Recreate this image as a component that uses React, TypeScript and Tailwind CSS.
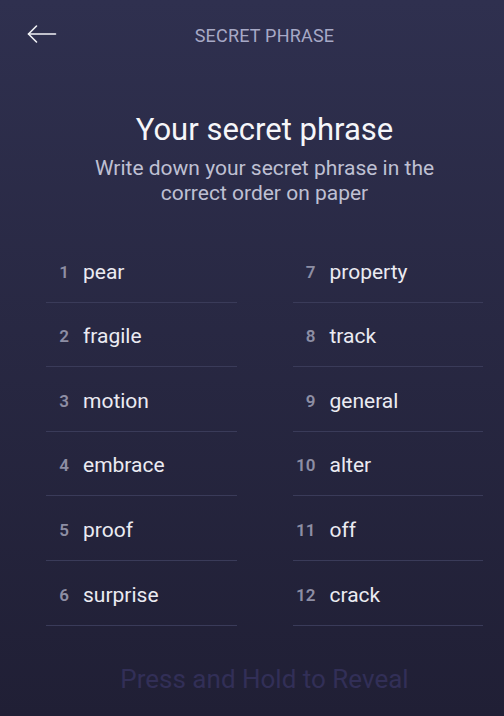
import React from 'react';

const words = [
	'pear',
	'fragile',
	'motion',
	'embrace',
	'proof',
	'surprise',
	'property',
	'track',
	'general',
	'alter',
	'off',
	'crack',
];

function WordColumn({ start }: { start: number }) {
	return (
		<div className="flex flex-col">
			{words.slice(start, start + 6).map((w, i) => (
				<div key={w} className="flex h-[64.6px] items-center border-b border-[#3a3b59] pt-[5px]">
					<span className="w-[23px] text-right text-[17px] font-semibold text-[#8d8ea4]">{start + i + 1}</span>
					<span className="ml-[14px] text-[21px] text-[#ebebf2]">{w}</span>
				</div>
			))}
		</div>
	);
}

export default function App() {
	return (
		<div
			className="min-h-[716px] w-full bg-gradient-to-b from-[#2f304f] to-[#201f35] pl-[25px]"
			style={{ fontFamily: 'Roboto, "Noto Sans", sans-serif' }}
		>
			{/* header */}
			<div className="relative flex h-[70px] items-center justify-center">
				<button className="absolute left-[2px] top-[24px]">
					<svg width="30" height="20" viewBox="0 0 30 20" fill="none" stroke="#f2f2f6" strokeWidth="1.6" strokeLinecap="round" strokeLinejoin="round">
						<path d="M28.5 10H1.5" />
						<path d="M9.5 2L1.5 10L9.5 18" />
					</svg>
				</button>
				<span className="text-[18px] tracking-[0.2px] text-[#a7a9c6]">SECRET PHRASE</span>
			</div>

			<h1 className="mt-[42px] text-center text-[31px] leading-[36px] text-[#f6f6f9]">Your secret phrase</h1>
			<p className="mx-auto mt-[8px] w-[380px] text-center text-[21px] leading-[25px] text-[#bfc0d3]">
				Write down your secret phrase in the correct order on paper
			</p>

			<div className="mx-[21px] mt-[32px] grid grid-cols-2 gap-x-[56px]">
				<WordColumn start={0} />
				<WordColumn start={6} />
			</div>

			<div className="mt-[37px] text-center text-[26px] leading-[32px] text-[#322f57]">Press and Hold to Reveal</div>
		</div>
	);
}
